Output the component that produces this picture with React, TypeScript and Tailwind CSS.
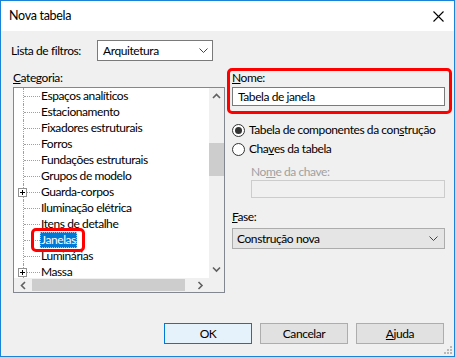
import React from 'react';

const categories = [
  { name: 'Espaços analíticos' },
  { name: 'Estacionamento' },
  { name: 'Fixadores estruturais' },
  { name: 'Forros' },
  { name: 'Fundações estruturais' },
  { name: 'Grupos de modelo' },
  { name: 'Guarda-corpos', plus: true },
  { name: 'Iluminação elétrica' },
  { name: 'Itens de detalhe' },
  { name: 'Janelas', selected: true },
  { name: 'Luminárias' },
  { name: 'Massa', plus: true },
];

const Chevron = ({ dir, className }: { dir: 'up' | 'down' | 'left' | 'right'; className?: string }) => {
  const d = {
    up: 'M1 5 L4.5 1.5 L8 5',
    down: 'M1 1.5 L4.5 5 L8 1.5',
    left: 'M5 1 L1.5 4.5 L5 8',
    right: 'M1.5 1 L5 4.5 L1.5 8',
  }[dir];
  const vert = dir === 'up' || dir === 'down';
  return (
    <svg
      width={vert ? 9 : 7}
      height={vert ? 7 : 9}
      viewBox={vert ? '0 0 9 7' : '0 0 7 9'}
      className={className}
    >
      <path d={d} fill="none" stroke="#606060" strokeWidth="1.6" />
    </svg>
  );
};

const ComboArrow = () => (
  <svg width="9" height="5" viewBox="0 0 9 5">
    <path d="M0.5 0.5 L4.5 4.5 L8.5 0.5" fill="none" stroke="#444" strokeWidth="1" />
  </svg>
);

const Radio = ({ checked }: { checked?: boolean }) => (
  <span className="w-[13px] h-[13px] rounded-full border border-[#333] bg-white flex items-center justify-center shrink-0">
    {checked && <span className="w-[7px] h-[7px] rounded-full bg-[#333]" />}
  </span>
);

const TreeRow = ({ name, plus, selected }: { name: string; plus?: boolean; selected?: boolean }) => (
  <div className="h-[16px] flex items-center">
    <div className="relative w-[26px] h-full shrink-0">
      <div className="absolute left-[9px] top-0 bottom-0 border-l border-dotted border-[#a0a0a0]" />
      <div className="absolute left-[10px] right-0 top-[8px] border-t border-dotted border-[#a0a0a0]" />
      {plus && (
        <div className="absolute left-[4px] top-[4px] w-[9px] h-[9px] border border-[#919191] bg-white flex items-center justify-center">
          <svg width="5" height="5" viewBox="0 0 5 5">
            <path d="M0 2.5 H5 M2.5 0 V5" stroke="#000" strokeWidth="1" />
          </svg>
        </div>
      )}
    </div>
    <span
      className={
        selected
          ? 'h-full flex items-center px-[1px] bg-[#0078d7] text-white outline outline-1 outline-dotted outline-[#99c9ef] -outline-offset-1'
          : 'h-full flex items-center px-[1px]'
      }
    >
      {name}
    </span>
  </div>
);

export default function App() {
  return (
    <div
      className="w-[455px] h-[357px] flex flex-col border border-[#1883d7] bg-[#f0f0f0] text-black text-[12px] tracking-[-0.42px] relative overflow-hidden"
      style={{ fontFamily: 'Lato, "Noto Sans", sans-serif' }}
    >
      <div className="h-[30px] bg-white flex items-center justify-between pl-[8px] pr-[10px] shrink-0">
        <span className="text-[12.5px] tracking-[-0.3px]">Nova tabela</span>
        <svg width="11" height="11" viewBox="0 0 11 11">
          <path d="M0.5 0.5 L10.5 10.5 M10.5 0.5 L0.5 10.5" stroke="#000" strokeWidth="1.1" />
        </svg>
      </div>

      <div className="flex-1 flex flex-col">
        <div className="mt-[9px] h-[21px] flex items-center pl-[10px]">
          <span className="w-[86px]">Lista de filtros:</span>
          <div className="w-[116px] h-[21px] border border-[#7a7a7a] bg-white flex items-center justify-between pl-[5px] pr-[4px]">
            <span>Arquitetura</span>
            <ComboArrow />
          </div>
        </div>

        <div className="flex mt-[7px] pl-[12px]">
          <div className="w-[212px] flex flex-col">
            <div className="h-[19px] flex items-center">
              <span>
                <span className="underline">C</span>ategoria:
              </span>
            </div>
            <div className="h-[206px] border border-[#828790] bg-white flex flex-col">
              <div className="flex flex-1 min-h-0">
                <div className="flex-1 relative overflow-hidden">
                  {categories.map((c) => (
                    <TreeRow key={c.name} {...c} />
                  ))}
                  <div className="absolute left-[17px] top-[140px] w-[54px] h-[24px] border-[3px] border-[#f00] rounded-[5px]" />
                </div>
                <div className="w-[15px] bg-[#f0f0f0] flex flex-col">
                  <div className="h-[17px] flex items-center justify-center">
                    <Chevron dir="up" />
                  </div>
                  <div className="h-[38px]" />
                  <div className="h-[33px] bg-[#cdcdcd]" />
                  <div className="flex-1" />
                  <div className="h-[17px] flex items-center justify-center">
                    <Chevron dir="down" />
                  </div>
                </div>
              </div>
              <div className="h-[14px] flex bg-[#f0f0f0]">
                <div className="w-[18px] flex items-center justify-center">
                  <Chevron dir="left" />
                </div>
                <div className="w-[153px] my-[1px] bg-[#cdcdcd]" />
                <div className="flex-1 flex items-center justify-end pr-[5px]">
                  <Chevron dir="right" />
                </div>
                <div className="w-[15px]" />
              </div>
            </div>
          </div>

          <div className="relative ml-[7px] w-[213px] flex flex-col">
            <div className="absolute left-[-5px] top-0 w-[225px] h-[46px] border-[3px] border-[#f00] rounded-[5px]" />
            <div className="h-[19px] flex items-center">
              <span>
                <span className="underline">N</span>ome:
              </span>
            </div>
            <div className="h-[19px] border border-[#7a7a7a] bg-white flex items-center pl-[5px]">
              Tabela de janela
            </div>

            <div className="mt-[15px] h-[18px] flex items-center gap-[4px]">
              <Radio checked />
              <span>
                Tabela de componentes da con<span className="underline">s</span>trução
              </span>
            </div>
            <div className="mt-[1px] h-[18px] flex items-center gap-[4px]">
              <Radio />
              <span>
                Cha<span className="underline">v</span>es da tabela
              </span>
            </div>

            <div className="mt-[6px] h-[16px] flex items-center pl-[19px] text-[#a0a0a0]">
              <span>
                No<span className="underline">m</span>e da chave:
              </span>
            </div>
            <div className="ml-[19px] w-[194px] h-[18px] border border-[#cccccc] bg-[#f0f0f0]" />

            <div className="mt-[11px] h-[16px] flex items-center">
              <span>
                <span className="underline">F</span>ase:
              </span>
            </div>
            <div className="mt-[3px] h-[21px] border border-[#acacac] bg-[#e5e5e5] flex items-center justify-between pl-[4px] pr-[6px]">
              <span>Construção nova</span>
              <ComboArrow />
            </div>
          </div>
        </div>

        <div className="mt-auto mb-[12px] pr-[10px] flex justify-end gap-[8px]">
          <button
            type="button"
            className="w-[88px] h-[21px] border border-[#0078d7] bg-[#e5f1fb] flex items-center justify-center"
          >
            OK
          </button>
          <button
            type="button"
            className="w-[88px] h-[21px] border border-[#adadad] bg-[#e1e1e1] flex items-center justify-center"
          >
            Cancelar
          </button>
          <button
            type="button"
            className="w-[88px] h-[21px] border border-[#adadad] bg-[#e1e1e1] flex items-center justify-center"
          >
            <span>
              <span className="underline">A</span>juda
            </span>
          </button>
        </div>
      </div>

      <svg className="absolute right-[2px] bottom-[2px]" width="8" height="8" viewBox="0 0 8 8">
        <rect x="6" y="0" width="2" height="2" fill="#b8b8b8" />
        <rect x="3" y="3" width="2" height="2" fill="#b8b8b8" />
        <rect x="6" y="3" width="2" height="2" fill="#b8b8b8" />
        <rect x="0" y="6" width="2" height="2" fill="#b8b8b8" />
        <rect x="3" y="6" width="2" height="2" fill="#b8b8b8" />
        <rect x="6" y="6" width="2" height="2" fill="#b8b8b8" />
      </svg>
    </div>
  );
}
